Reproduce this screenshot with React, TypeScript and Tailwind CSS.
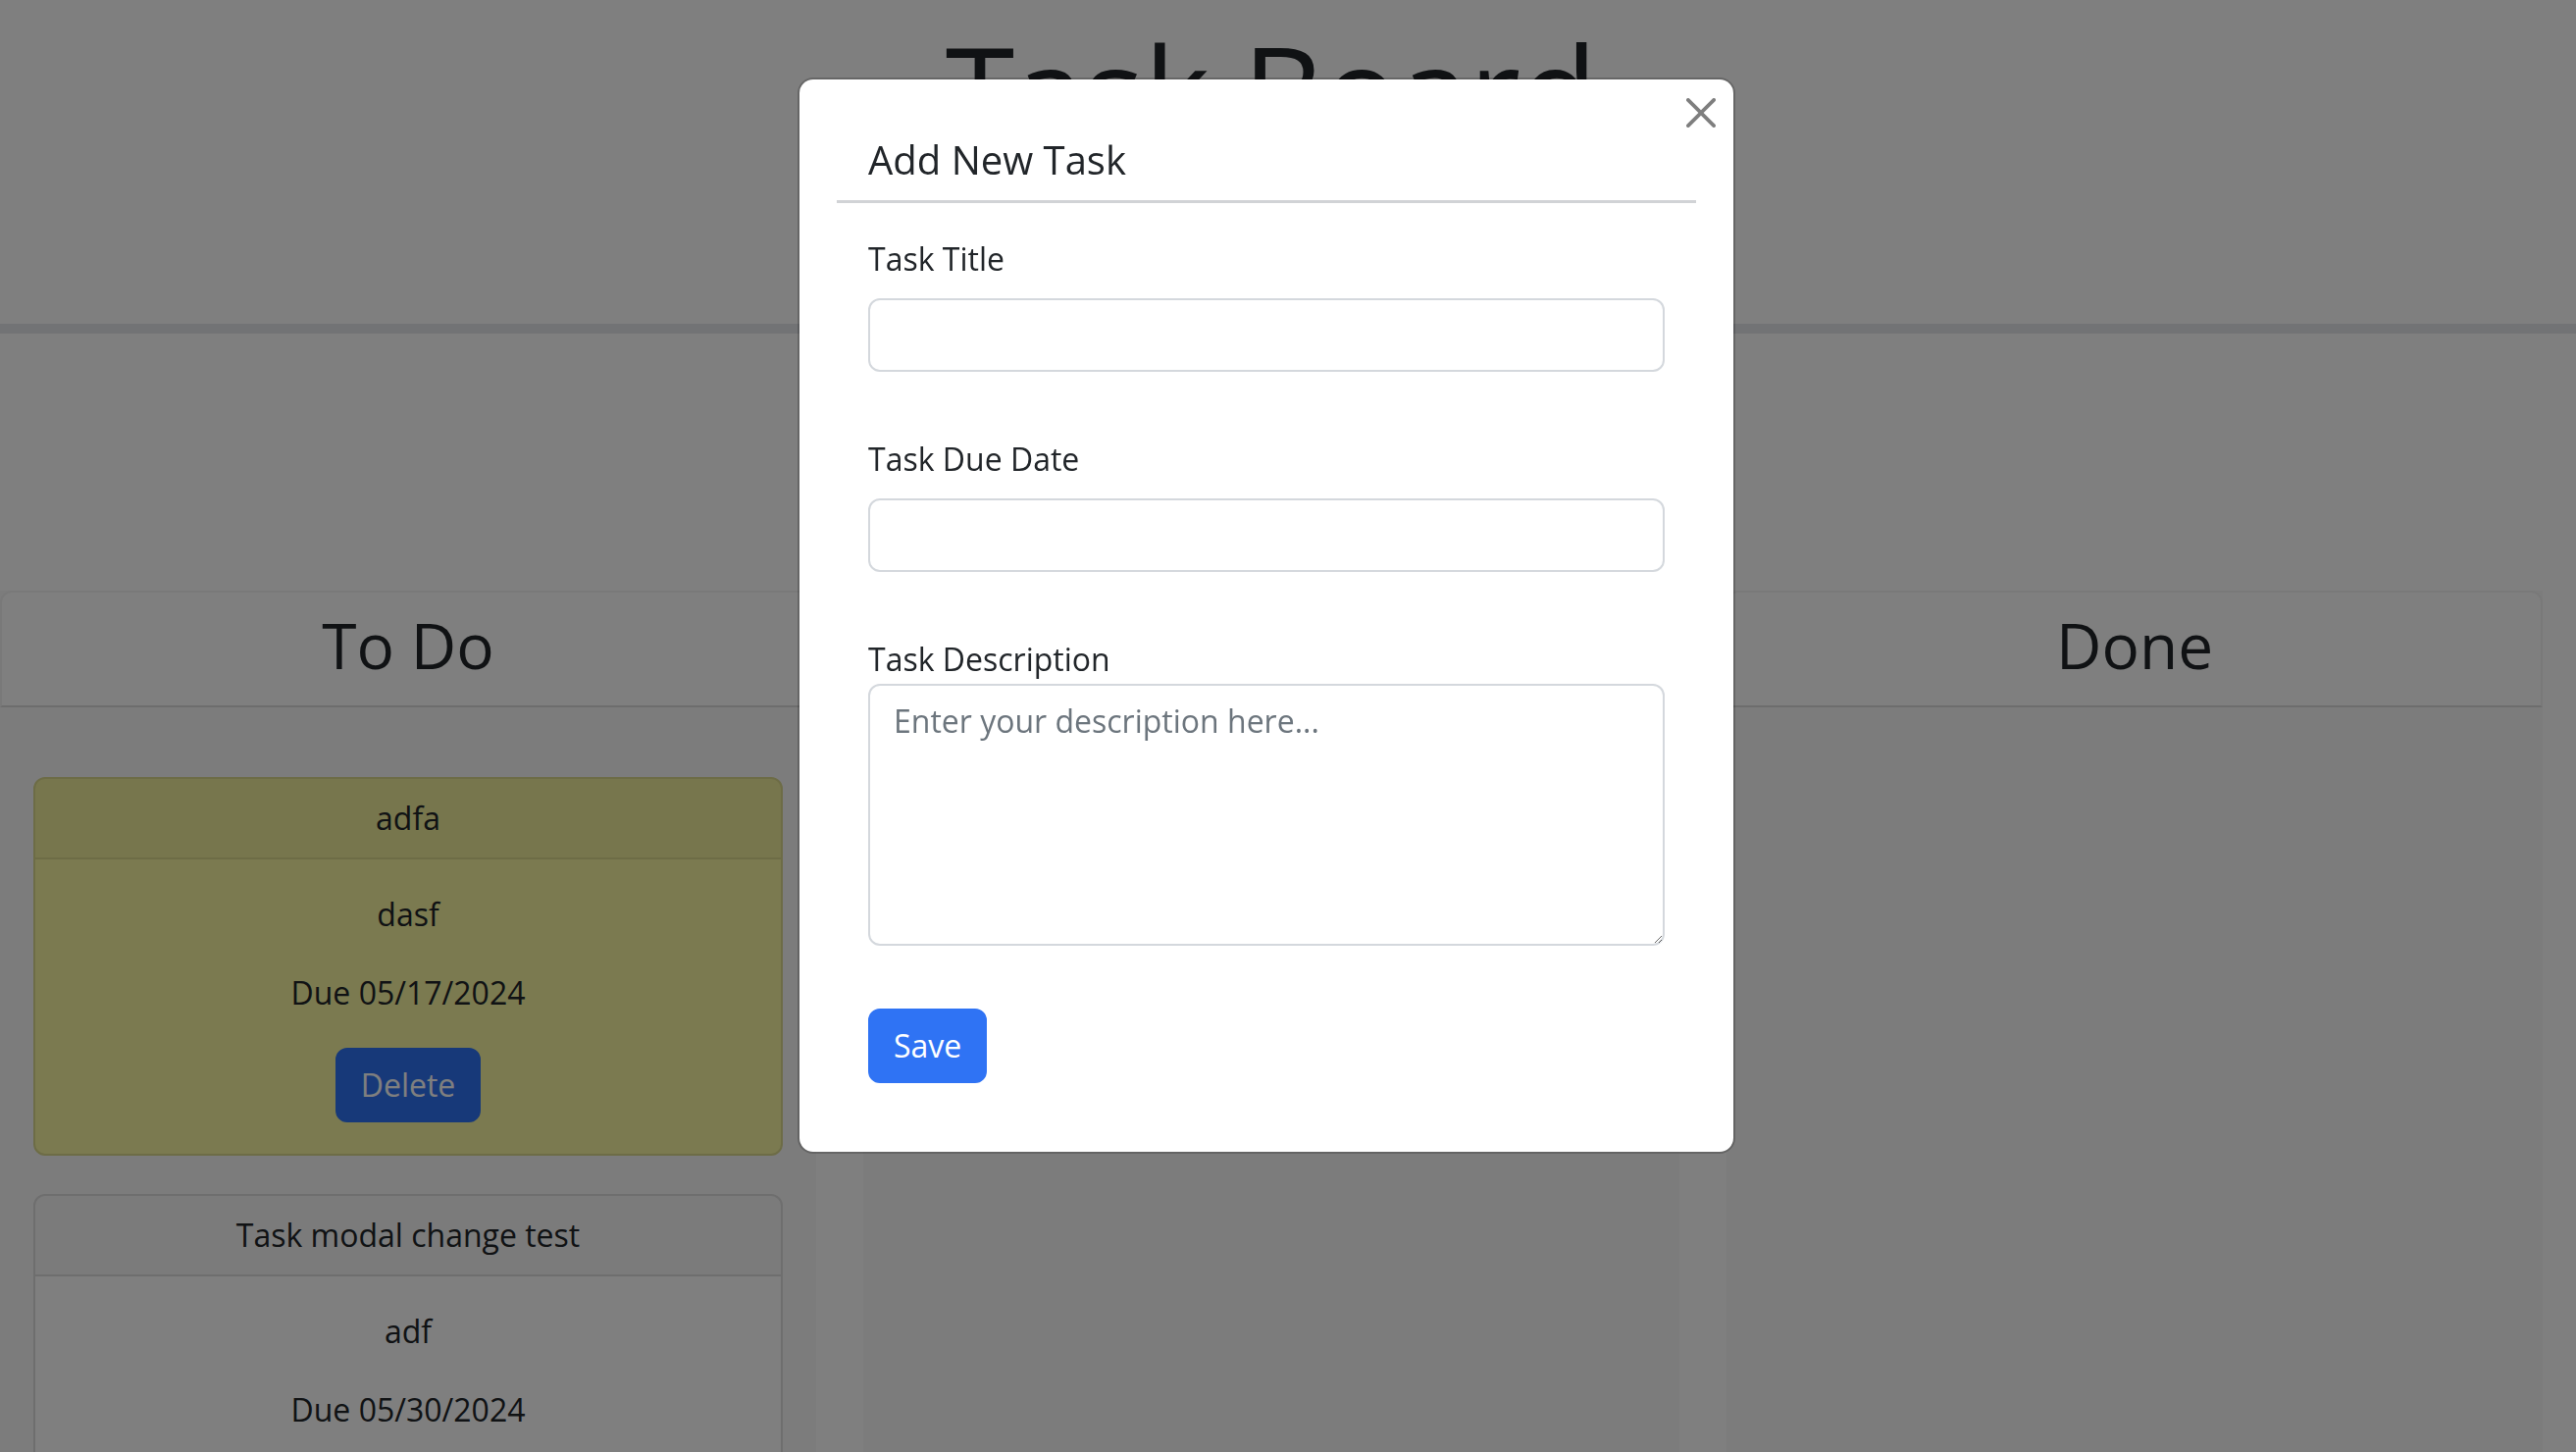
import React from "react";

type Task = { title: string; desc: string; due: string; tone: "warn" | "plain" };

const todo: Task[] = [
  { title: "adfa", desc: "dasf", due: "Due 05/17/2024", tone: "warn" },
  { title: "Task modal change test", desc: "adf", due: "Due 05/30/2024", tone: "plain" },
];

function TaskCard({ t }: { t: Task }) {
  const warn = t.tone === "warn";
  return (
    <div
      className={
        warn
          ? "rounded-[12px] border-2 border-[#dad88c] bg-[#f6f4a0] text-center text-[32px] leading-[48px] text-[#212529] overflow-hidden"
          : "rounded-[12px] border-2 border-[#dcdcdc] bg-white text-center text-[32px] leading-[48px] text-[#212529] overflow-hidden"
      }
    >
      <div
        className={
          warn
            ? "py-[16px] bg-black/[0.03] border-b-2 border-[#dad88c]"
            : "py-[16px] bg-black/[0.03] border-b-2 border-[#dcdcdc]"
        }
      >
        {t.title}
      </div>
      <div className="p-[32px] flex flex-col items-center">
        <p className="mb-[32px]">{t.desc}</p>
        <p className="mb-[32px]">{t.due}</p>
        <button className="h-[76px] px-[24px] rounded-[12px] border-2 border-[#2e72f3] bg-[#2e72f3] text-white text-[32px] leading-[48px]">
          Delete
        </button>
      </div>
    </div>
  );
}

function Column({ name, tasks }: { name: string; tasks: Task[] }) {
  return (
    <div className="w-[832px] h-[900px] shrink-0 bg-[#f9f9f9] flex flex-col">
      <div className="h-[119px] shrink-0 bg-white rounded-t-[12px] border-x-2 border-t-2 border-[#f2f2f2] border-b-2 border-b-[#dadada] flex items-center justify-center pb-[9px]">
        <h2 className="text-[64px] leading-[77px] font-medium text-[#212529]">{name}</h2>
      </div>
      <div className="px-[34px] pt-[71px] flex flex-col gap-[39px]">
        {tasks.map((t) => (
          <TaskCard key={t.title} t={t} />
        ))}
      </div>
    </div>
  );
}

export default function App() {
  return (
    <div className="relative h-[1480px] w-[2626px] overflow-hidden bg-white font-['Open_Sans',sans-serif]">
      <div className="w-[2592px] pt-[15px] text-center">
        <h1 className="text-[128px] leading-[154px] font-medium text-[#212529]">Task Board</h1>
      </div>
      <div className="mt-[161px] h-[10px] w-full bg-[#e4e6ea]" />
      <div className="mt-[262px] flex gap-[48px] w-[2592px]">
        <Column name="To Do" tasks={todo} />
        <Column name="In Progress" tasks={[]} />
        <Column name="Done" tasks={[]} />
      </div>

      <div className="fixed inset-0 bg-black/50">
        <div className="w-[2582px] flex justify-center pt-[79px]">
          <div className="relative w-[956px] h-[1097px] bg-white bg-clip-padding border-2 border-black/[0.2] rounded-[16px] px-[70px] pt-[58px] text-[#212529]">
            <button className="absolute right-[18px] top-[19px] w-[30px] h-[30px] opacity-50" aria-label="Close">
              <svg viewBox="0 0 16 16" width="30" height="30" fill="#000">
                <path d="M.293.293a1 1 0 0 1 1.414 0L8 6.586 14.293.293a1 1 0 1 1 1.414 1.414L9.414 8l6.293 6.293a1 1 0 0 1-1.414 1.414L8 9.414l-6.293 6.293a1 1 0 0 1-1.414-1.414L6.586 8 .293 1.707a1 1 0 0 1 0-1.414z" />
              </svg>
            </button>
            <h5 className="text-[40px] leading-[48px] font-medium">Add New Task</h5>
            <div className="-mx-[32px] mt-[17px] h-[3px] bg-[#d1d3d6]" />
            <label className="block mt-[33px] text-[32px] leading-[48px]">Task Title</label>
            <input className="block mt-[16px] h-[75px] w-full border-2 border-[#d4d8dd] rounded-[12px] px-[24px] text-[32px] outline-none" />
            <label className="block mt-[65px] text-[32px] leading-[48px]">Task Due Date</label>
            <input className="block mt-[16px] h-[75px] w-full border-2 border-[#d4d8dd] rounded-[12px] px-[24px] text-[32px] outline-none" />
            <label className="block mt-[65px] text-[32px] leading-[48px]">Task Description</label>
            <textarea
              className="block mt-[1px] h-[267px] w-full border-2 border-[#d4d8dd] rounded-[12px] px-[24px] py-[12px] text-[32px] leading-[48px] placeholder:text-[#6c757d] outline-none"
              placeholder="Enter your description here..."
            />
            <button className="mt-[64px] h-[76px] px-[24px] rounded-[12px] border-2 border-[#2f73f4] bg-[#2f73f4] text-white text-[32px] leading-[48px]">
              Save
            </button>
          </div>
        </div>
      </div>
    </div>
  );
}
